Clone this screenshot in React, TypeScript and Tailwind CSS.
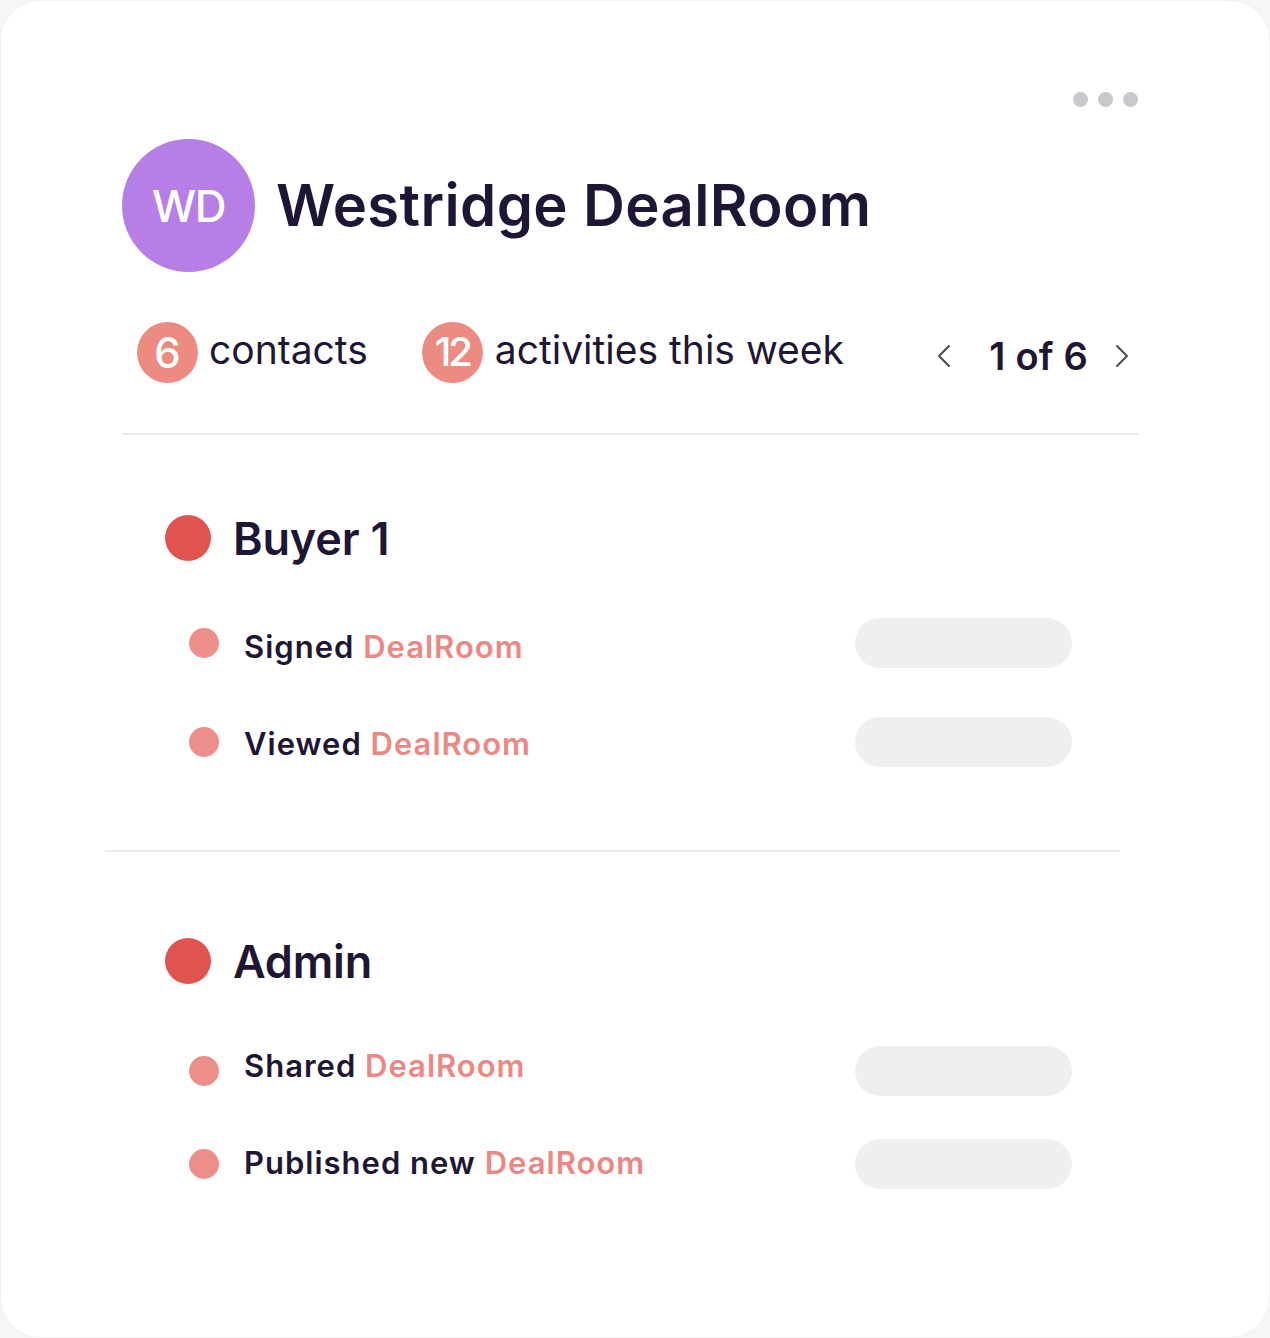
import React from "react";

const font = { fontFamily: "Inter, 'Noto Sans', sans-serif" };

function Pill() {
  return <div className="w-[217px] h-[50px] rounded-full bg-[#efefef]" />;
}

function Activity({ verb, textClass }: { verb: string; textClass: string }) {
  return (
    <div className="flex items-center h-[50px] ml-[67px] w-[883px]">
      <div className="w-[30px] h-[30px] rounded-full bg-[#ec8f8a]" />
      <div className={"ml-[25px] text-[31px] font-semibold tracking-[1px] text-[#1f1534] flex-1 leading-none " + textClass}>
        {verb} <span className="text-[#ec8883]">DealRoom</span>
      </div>
      <Pill />
    </div>
  );
}

function SectionHead({ label }: { label: string }) {
  return (
    <div className="flex items-center h-[46px] ml-[43px]">
      <div className="w-[46px] h-[46px] rounded-full bg-[#e05450]" />
      <div className="ml-[22px] text-[45px] font-semibold tracking-[-0.2px] text-[#1f1534] leading-none">
        {label}
      </div>
    </div>
  );
}

export default function App() {
  return (
    <div className="w-[1270px] h-[1338px] bg-[#f6f6f6]" style={font}>
      <div className="h-full rounded-[40px] bg-white border border-[#f1f1f1] pl-[121px] pr-[131px] pt-[91px]">
        {/* dots */}
        <div className="flex justify-end gap-[10px] h-[15px]">
          <div className="w-[15px] h-[15px] rounded-full bg-[#c9c9cd]" />
          <div className="w-[15px] h-[15px] rounded-full bg-[#c9c9cd]" />
          <div className="w-[15px] h-[15px] rounded-full bg-[#c9c9cd]" />
        </div>

        {/* header */}
        <div className="flex items-center mt-[32px]">
          <div className="w-[133px] h-[133px] rounded-full bg-[#b77fe6] flex items-center justify-center text-white text-[44px] font-medium tracking-[-1.5px]">
            WD
          </div>
          <div className="ml-[21px] text-[58px] font-semibold tracking-[0.4px] text-[#1f1534] leading-none pb-[2px]">
            Westridge DealRoom
          </div>
        </div>

        {/* stats */}
        <div className="flex items-center h-[62px] mt-[49px]">
          <div className="flex items-center ml-[15px]">
            <div className="w-[61px] h-[61px] rounded-full bg-[#ec8b82] flex items-center justify-center text-white text-[42px] font-medium">
              6
            </div>
            <div className="ml-[11px] text-[39px] text-[#1f1534] pb-[4px]">contacts</div>
          </div>
          <div className="flex items-center ml-[54px]">
            <div className="w-[61px] h-[61px] rounded-full bg-[#ec8b82] flex items-center justify-center text-white text-[40px] font-medium tracking-[-3px]">
              12
            </div>
            <div className="ml-[12px] text-[39px] text-[#1f1534] pb-[4px]">activities this week</div>
          </div>
          <div className="flex items-center ml-auto mr-[8px] mt-[8px]">
            <svg width="16" height="24" viewBox="0 0 16 24" fill="none" stroke="#4a4a55" strokeWidth="2" strokeLinecap="round" strokeLinejoin="round">
              <polyline points="13,2 3,12 13,22" />
            </svg>
            <div className="ml-[37px] mr-[26px] text-[38px] font-semibold text-[#1f1534] tracking-[0.2px] leading-none">1 of 6</div>
            <svg width="16" height="24" viewBox="0 0 16 24" fill="none" stroke="#4a4a55" strokeWidth="2" strokeLinecap="round" strokeLinejoin="round">
              <polyline points="3,2 13,12 3,22" />
            </svg>
          </div>
        </div>

        {/* divider */}
        <div className="h-[2px] bg-[#ebebeb] mt-[50px]" />

        {/* Buyer 1 */}
        <div className="mt-[80px]">
          <SectionHead label="Buyer 1" />
        </div>
        <div className="mt-[57px]">
          <Activity verb="Signed" textClass="pt-[6px]" />
        </div>
        <div className="mt-[49px]">
          <Activity verb="Viewed" textClass="pt-[2px]" />
        </div>

        {/* divider 2 */}
        <div className="h-[2px] bg-[#ebebeb] mt-[83px] -ml-[17px] mr-[18px]" />

        {/* Admin */}
        <div className="mt-[86px]">
          <SectionHead label="Admin" />
        </div>
        <div className="mt-[62px]">
          <Activity verb="Shared" textClass="pb-[12px]" />
        </div>
        <div className="mt-[43px]">
          <Activity verb="Published new" textClass="pb-[4px]" />
        </div>
      </div>
    </div>
  );
}
